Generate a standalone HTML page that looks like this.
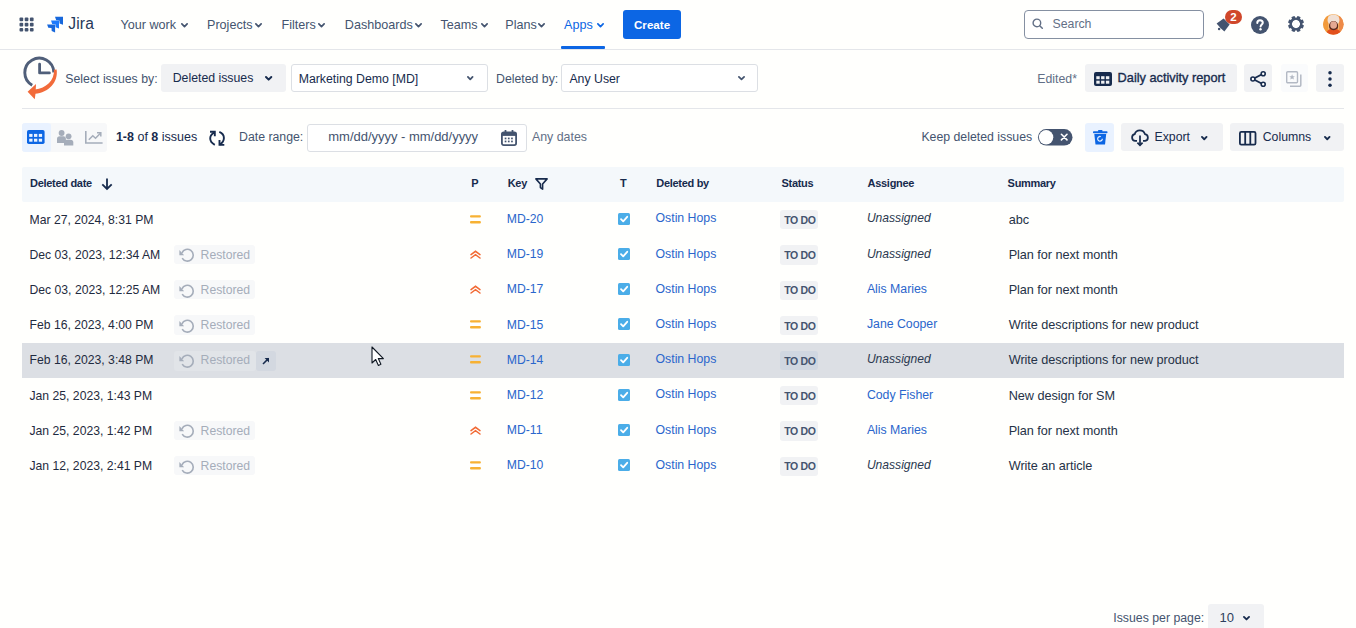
<!DOCTYPE html>
<html><head><meta charset="utf-8">
<style>
*{margin:0;padding:0;box-sizing:border-box}
html,body{width:1356px;height:628px;overflow:hidden;background:#fffffd;font-family:"Liberation Sans",sans-serif;color:#172B4D}
.a{position:absolute}
.t{position:absolute;white-space:nowrap;height:20px;line-height:20px;font-size:12.3px}
svg{position:absolute;overflow:visible}
.box{position:absolute;border-radius:3px}
</style></head><body>

<div class="box" style="left:0px;top:49px;width:1356px;height:1px;background:#E4E6EA;border-radius:0px;"></div>
<svg style="left:19px;top:17px" width="15" height="15" viewBox="0 0 15 15"><g fill="#44546F"><rect x="0.5" y="0.5" width="3.7" height="3.7" rx="1"/><rect x="0.5" y="5.7" width="3.7" height="3.7" rx="1"/><rect x="0.5" y="10.9" width="3.7" height="3.7" rx="1"/><rect x="5.7" y="0.5" width="3.7" height="3.7" rx="1"/><rect x="5.7" y="5.7" width="3.7" height="3.7" rx="1"/><rect x="5.7" y="10.9" width="3.7" height="3.7" rx="1"/><rect x="10.9" y="0.5" width="3.7" height="3.7" rx="1"/><rect x="10.9" y="5.7" width="3.7" height="3.7" rx="1"/><rect x="10.9" y="10.9" width="3.7" height="3.7" rx="1"/></g></svg>
<svg style="left:0;top:0" width="70" height="40" viewBox="0 0 70 40"><path d="M55.0 16.8 L63.0 16.8 L63.0 24.8 L59.6 23.4 L59.4 20.400000000000002 L56.2 20.2 Z" fill="#1868DB"/><path d="M51.0 20.6 L59.0 20.6 L59.0 28.6 L55.6 27.200000000000003 L55.4 24.200000000000003 L52.2 24.0 Z" fill="#1D7AFC"/><path d="M47.1 24.4 L55.1 24.4 L55.1 32.4 L51.7 31.0 L51.5 28.0 L48.300000000000004 27.799999999999997 Z" fill="#1868DB"/></svg>
<div class="t" style="left:68.2px;top:14.30px;font-size:15.6px;color:#253858;letter-spacing:0.2px">Jira</div>
<div class="t" style="left:120.5px;top:14.50px;font-size:12.6px;color:#44546F;">Your work</div>
<svg style="left:181px;top:22.7px" width="7" height="4.4" viewBox="0 0 7 4.4"><path d="M0.85 0.85 L3.50 3.55 L6.15 0.85" fill="none" stroke="#44546F" stroke-width="1.7" stroke-linecap="round" stroke-linejoin="round"/></svg>
<div class="t" style="left:207px;top:14.50px;font-size:12.6px;color:#44546F;">Projects</div>
<svg style="left:255.3px;top:22.7px" width="7" height="4.4" viewBox="0 0 7 4.4"><path d="M0.85 0.85 L3.50 3.55 L6.15 0.85" fill="none" stroke="#44546F" stroke-width="1.7" stroke-linecap="round" stroke-linejoin="round"/></svg>
<div class="t" style="left:281.5px;top:14.50px;font-size:12.6px;color:#44546F;">Filters</div>
<svg style="left:318.2px;top:22.7px" width="7" height="4.4" viewBox="0 0 7 4.4"><path d="M0.85 0.85 L3.50 3.55 L6.15 0.85" fill="none" stroke="#44546F" stroke-width="1.7" stroke-linecap="round" stroke-linejoin="round"/></svg>
<div class="t" style="left:344.8px;top:14.50px;font-size:12.6px;color:#44546F;">Dashboards</div>
<svg style="left:415.2px;top:22.7px" width="7" height="4.4" viewBox="0 0 7 4.4"><path d="M0.85 0.85 L3.50 3.55 L6.15 0.85" fill="none" stroke="#44546F" stroke-width="1.7" stroke-linecap="round" stroke-linejoin="round"/></svg>
<div class="t" style="left:440.5px;top:14.50px;font-size:12.6px;color:#44546F;">Teams</div>
<svg style="left:480.5px;top:22.7px" width="7" height="4.4" viewBox="0 0 7 4.4"><path d="M0.85 0.85 L3.50 3.55 L6.15 0.85" fill="none" stroke="#44546F" stroke-width="1.7" stroke-linecap="round" stroke-linejoin="round"/></svg>
<div class="t" style="left:505.3px;top:14.50px;font-size:12.6px;color:#44546F;">Plans</div>
<svg style="left:538.2px;top:22.7px" width="7" height="4.4" viewBox="0 0 7 4.4"><path d="M0.85 0.85 L3.50 3.55 L6.15 0.85" fill="none" stroke="#44546F" stroke-width="1.7" stroke-linecap="round" stroke-linejoin="round"/></svg>
<div class="t" style="left:564px;top:14.50px;font-size:12.6px;color:#0C66E4;">Apps</div>
<svg style="left:596.5px;top:22.7px" width="7" height="4.4" viewBox="0 0 7 4.4"><path d="M0.85 0.85 L3.50 3.55 L6.15 0.85" fill="none" stroke="#0C66E4" stroke-width="1.7" stroke-linecap="round" stroke-linejoin="round"/></svg>
<div class="box" style="left:561px;top:46px;width:44px;height:3px;background:#0C66E4;border-radius:1px;"></div>
<div class="box" style="left:623px;top:10px;width:58px;height:29px;background:#0C66E4;border-radius:3px;"></div>
<div class="t" style="left:634px;top:14.50px;font-size:11.6px;color:#fff;font-weight:bold;">Create</div>
<div class="box" style="left:1024px;top:10px;width:180px;height:29px;border:1px solid #8590A2;border-radius:4px;background:#fff"></div>
<svg style="left:1032px;top:17.5px" width="12" height="12" viewBox="0 0 12 12"><circle cx="4.9" cy="4.9" r="3.8" fill="none" stroke="#626F86" stroke-width="1.4"/><path d="M7.7 7.7 L10.3 10.3" stroke="#626F86" stroke-width="1.5" stroke-linecap="round"/></svg>
<div class="t" style="left:1052.5px;top:13.80px;font-size:12.3px;color:#626F86;">Search</div>
<svg style="left:1212px;top:8px" width="22" height="26" viewBox="0 0 22 26"><path d="M4.6 15.5 L11.6 10.4 L17.6 16.4 L12.4 23.6 Q8.2 20.2 4.6 15.5 Z" fill="#44546F"/><circle cx="7.1" cy="21.1" r="1.25" fill="#44546F"/></svg>
<div class="box" style="left:1225.4px;top:10px;width:16.4px;height:13.8px;border-radius:7px;background:#D0472A"></div>
<div class="t" style="left:1230.3px;top:6.9px;font-size:11.5px;color:#fff;font-weight:bold">2</div>
<svg style="left:1251px;top:15.5px" width="18" height="18" viewBox="0 0 18 18"><circle cx="9" cy="9" r="9" fill="#44546F"/><path d="M6.3 7 C6.3 5.3 7.5 4.3 9 4.3 C10.6 4.3 11.8 5.3 11.8 6.8 C11.8 8.4 9.6 8.8 9.6 10.6" fill="none" stroke="#fff" stroke-width="2" stroke-linecap="round"/><circle cx="9.5" cy="13.3" r="1.2" fill="#fff"/></svg>
<svg style="left:1287.5px;top:16.3px" width="16" height="16" viewBox="0 0 16 16"><g fill="#44546F"><rect x="6.3" y="0" width="3.4" height="4" rx="0.4" transform="rotate(22.5 8 8)"/><rect x="6.3" y="0" width="3.4" height="4" rx="0.4" transform="rotate(67.5 8 8)"/><rect x="6.3" y="0" width="3.4" height="4" rx="0.4" transform="rotate(112.5 8 8)"/><rect x="6.3" y="0" width="3.4" height="4" rx="0.4" transform="rotate(157.5 8 8)"/><rect x="6.3" y="0" width="3.4" height="4" rx="0.4" transform="rotate(202.5 8 8)"/><rect x="6.3" y="0" width="3.4" height="4" rx="0.4" transform="rotate(247.5 8 8)"/><rect x="6.3" y="0" width="3.4" height="4" rx="0.4" transform="rotate(292.5 8 8)"/><rect x="6.3" y="0" width="3.4" height="4" rx="0.4" transform="rotate(337.5 8 8)"/></g><circle cx="8" cy="8" r="5.4" fill="none" stroke="#44546F" stroke-width="2.3"/></svg>
<svg style="left:1323.2px;top:14px" width="21" height="21" viewBox="0 0 21 21"><defs><clipPath id="avc"><circle cx="10.35" cy="10.35" r="10.3"/></clipPath></defs><g clip-path="url(#avc)"><rect x="0" y="0" width="21" height="21" fill="#F4B46A"/><rect x="0" y="0" width="5" height="21" fill="#F29A3A"/><rect x="16" y="0" width="5" height="21" fill="#EE8A48"/><ellipse cx="10.5" cy="6" rx="6" ry="5.5" fill="#F1E0D4"/><ellipse cx="10.6" cy="12" rx="4.6" ry="5" fill="#5B2B1E"/><ellipse cx="10.6" cy="11" rx="3.4" ry="3.8" fill="#E4A892"/><path d="M3 21 Q4 15.5 7.5 15 Q10.5 17.5 13.5 15 Q17 15.5 18 21 Z" fill="#E2501C"/></g></svg>
<svg style="left:0;top:0" width="70" height="110" viewBox="0 0 70 110"><path d="M32.2 85.3 A14.5 14.5 0 1 1 53.8 72.4" fill="none" stroke="#505F79" stroke-width="2.9"/><path d="M39.6 64.2 V72.9 H49.4" fill="none" stroke="#505F79" stroke-width="2.8" stroke-linecap="round" stroke-linejoin="round"/><path d="M56.6 69.4 C58.6 82 48.5 92.6 35 93.8 L35 89.6 C46 88.4 54.6 80.5 54 69.8 Z" fill="#F26B3A"/><path d="M36 84 L27.6 91.8 L34.8 99.3 L35.6 93 Z" fill="#F26B3A"/></svg>
<div class="t" style="left:65.3px;top:68.70px;font-size:12.3px;color:#44546F;">Select issues by:</div>
<div class="box" style="left:161px;top:64px;width:124.5px;height:28.3px;background:#F1F2F4;border-radius:3px;"></div>
<div class="t" style="left:172.7px;top:68.10px;font-size:12.3px;color:#172B4D;">Deleted issues</div>
<svg style="left:265px;top:76px" width="7.3" height="4.6" viewBox="0 0 7.3 4.6"><path d="M1.00 1.00 L3.65 3.60 L6.30 1.00" fill="none" stroke="#172B4D" stroke-width="2" stroke-linecap="round" stroke-linejoin="round"/></svg>
<div class="box" style="left:290.5px;top:64.3px;width:197.2px;height:28.2px;border:1px solid #DCDFE4;border-radius:3px;background:#fff"></div>
<div class="t" style="left:298.7px;top:68.60px;font-size:12.3px;color:#172B4D;">Marketing Demo [MD]</div>
<svg style="left:467.4px;top:76px" width="6.5" height="4.2" viewBox="0 0 6.5 4.2"><path d="M0.90 0.90 L3.25 3.30 L5.60 0.90" fill="none" stroke="#44546F" stroke-width="1.8" stroke-linecap="round" stroke-linejoin="round"/></svg>
<div class="t" style="left:496px;top:68.60px;font-size:12.3px;color:#44546F;">Deleted by:</div>
<div class="box" style="left:561.3px;top:64.3px;width:197.2px;height:28.2px;border:1px solid #DCDFE4;border-radius:3px;background:#fff"></div>
<div class="t" style="left:569.4px;top:68.60px;font-size:12.3px;color:#172B4D;">Any User</div>
<svg style="left:737.8px;top:76px" width="7" height="4.2" viewBox="0 0 7 4.2"><path d="M0.90 0.90 L3.50 3.30 L6.10 0.90" fill="none" stroke="#44546F" stroke-width="1.8" stroke-linecap="round" stroke-linejoin="round"/></svg>
<div class="t" style="left:1037.3px;top:68.60px;font-size:12.3px;color:#626F86;">Edited*</div>
<div class="box" style="left:1085.2px;top:64.2px;width:151.6px;height:28.2px;background:#F1F2F4;border-radius:3px;"></div>
<svg style="left:1094px;top:71.8px" width="18" height="14" viewBox="0 0 18 14"><rect x="0" y="0" width="18" height="14" rx="2" fill="#172B4D"/><rect x="2.3" y="4.2" width="3.4" height="3" fill="#F1F2F4"/><rect x="2.3" y="8.7" width="3.4" height="3" fill="#F1F2F4"/><rect x="7.1" y="4.2" width="3.4" height="3" fill="#F1F2F4"/><rect x="7.1" y="8.7" width="3.4" height="3" fill="#F1F2F4"/><rect x="11.9" y="4.2" width="3.4" height="3" fill="#F1F2F4"/><rect x="11.9" y="8.7" width="3.4" height="3" fill="#F1F2F4"/></svg>
<div class="t" style="left:1117.6px;top:67.50px;font-size:12.75px;color:#172B4D;-webkit-text-stroke:0.35px #172B4D">Daily activity report</div>
<div class="box" style="left:1244.1px;top:64.2px;width:27.7px;height:28.2px;background:#F1F2F4;border-radius:3px;"></div>
<svg style="left:1249.8px;top:70.9px" width="16" height="16" viewBox="0 0 16 16"><path d="M13 2.8 L3 8 L13 13.2" fill="none" stroke="#172B4D" stroke-width="1.8"/><circle cx="13.2" cy="2.7" r="2" fill="#fff" stroke="#172B4D" stroke-width="1.6"/><circle cx="13.2" cy="13.3" r="2" fill="#fff" stroke="#172B4D" stroke-width="1.6"/><circle cx="2.9" cy="8" r="2" fill="#fff" stroke="#172B4D" stroke-width="1.6"/></svg>
<div class="box" style="left:1280.9px;top:64.2px;width:26.7px;height:28.2px;background:#FAFBFC;border-radius:3px;"></div>
<svg style="left:1285.7px;top:70.9px" width="16" height="16" viewBox="0 0 16 16"><rect x="0.7" y="0.7" width="10.8" height="11" rx="1" fill="none" stroke="#B3B9C4" stroke-width="1.4"/><path d="M14.8 3.5 V14.2 Q14.8 15.2 13.8 15.2 H4" fill="none" stroke="#B3B9C4" stroke-width="1.5"/><path d="M6.1 3.3 L6.9 5.2 L8.9 5.3 L7.4 6.6 L7.9 8.6 L6.1 7.5 L4.3 8.6 L4.8 6.6 L3.3 5.3 L5.3 5.2 Z" fill="#B3B9C4"/></svg>
<div class="box" style="left:1316.2px;top:64.2px;width:27.7px;height:28.2px;background:#F1F2F4;border-radius:3px;"></div>
<svg style="left:1328px;top:70.8px" width="4" height="16" viewBox="0 0 4 16"><circle cx="2" cy="1.8" r="1.75" fill="#172B4D"/><circle cx="2" cy="8" r="1.75" fill="#172B4D"/><circle cx="2" cy="14.3" r="1.75" fill="#172B4D"/></svg>
<div class="box" style="left:22px;top:108px;width:1322px;height:1px;background:#E4E6EA;border-radius:0px;"></div>
<div class="box" style="left:22.1px;top:123.3px;width:85px;height:28.3px;background:#F7F8F9;border-radius:3px;"></div>
<div class="box" style="left:22.1px;top:123.3px;width:29.2px;height:28.3px;background:#E9F2FF;border-radius:3px;"></div>
<svg style="left:27px;top:130.4px" width="18" height="14" viewBox="0 0 18 14"><rect x="0" y="0" width="17.6" height="14.1" rx="1.8" fill="#0C66E4"/><rect x="2.2" y="3.9" width="3.3" height="3" fill="#E9F2FF"/><rect x="2.2" y="8.7" width="3.3" height="3" fill="#E9F2FF"/><rect x="7.0" y="3.9" width="3.3" height="3" fill="#E9F2FF"/><rect x="7.0" y="8.7" width="3.3" height="3" fill="#E9F2FF"/><rect x="11.8" y="3.9" width="3.3" height="3" fill="#E9F2FF"/><rect x="11.8" y="8.7" width="3.3" height="3" fill="#E9F2FF"/></svg>
<svg style="left:56.6px;top:130px" width="17" height="16" viewBox="0 0 17 16"><g fill="#A5ADBA"><circle cx="4.6" cy="3" r="2.9"/><path d="M0 13 V9 Q0 6.3 2.8 6.3 H6.5 Q8.5 6.3 8.9 8 V13 Z"/><circle cx="11.6" cy="6.3" r="2.9"/><path d="M7 15.4 V12.5 Q7 9.8 9.8 9.8 H13.5 Q16.3 9.8 16.3 12.5 V15.4 Z"/></g></svg>
<svg style="left:85px;top:131.3px" width="18" height="13" viewBox="0 0 18 13"><path d="M0.8 0 V12 H17.6" fill="none" stroke="#A5ADBA" stroke-width="1.6"/><path d="M3.8 8.8 L7.8 4.8 L10.5 7.2 L15.4 2.2" fill="none" stroke="#A5ADBA" stroke-width="1.5"/><path d="M12 1.8 H15.8 V5.6" fill="none" stroke="#A5ADBA" stroke-width="1.5"/></svg>
<div class="t" style="left:115.9px;top:126.8px;font-size:12.5px;color:#172B4D"><b>1-8</b> of <b>8</b> issues</div>
<svg style="left:208.8px;top:130.5px" width="16" height="15" viewBox="0 0 16 15"><g fill="none" stroke="#172B4D" stroke-width="1.9"><path d="M5.6 1.3 C0 4 -0.6 10.5 5.8 13.8"/><path d="M1 0.7 H5.8 V5.2"/><path d="M10.3 0.9 C16.6 3.5 16.2 10.5 10.6 13.6"/><path d="M10.5 9.1 V13.9 H15.3"/></g></svg>
<div class="t" style="left:239px;top:126.80px;font-size:12.3px;color:#44546F;">Date range:</div>
<div class="box" style="left:306.6px;top:123.5px;width:220.8px;height:28.1px;border:1px solid #DCDFE4;border-radius:3px;background:#fff"></div>
<div class="t" style="left:328.3px;top:126.80px;font-size:13px;color:#44546F;letter-spacing:-0.02px">mm/dd/yyyy - mm/dd/yyyy</div>
<svg style="left:500.9px;top:130.2px" width="16" height="16" viewBox="0 0 16 16"><rect x="0.9" y="2.3" width="14.2" height="12.8" rx="1.8" fill="none" stroke="#44546F" stroke-width="1.8"/><rect x="0.9" y="2.3" width="14.2" height="3.6" fill="#44546F"/><rect x="3.6" y="0" width="1.8" height="3.5" rx="0.6" fill="#44546F"/><rect x="10.6" y="0" width="1.8" height="3.5" rx="0.6" fill="#44546F"/><rect x="3.7" y="7.6" width="1.7" height="1.7" fill="#44546F"/><rect x="3.7" y="10.6" width="1.7" height="1.7" fill="#44546F"/><rect x="6.9" y="7.6" width="1.7" height="1.7" fill="#44546F"/><rect x="6.9" y="10.6" width="1.7" height="1.7" fill="#44546F"/><rect x="10.1" y="7.6" width="1.7" height="1.7" fill="#44546F"/><rect x="10.1" y="10.6" width="1.7" height="1.7" fill="#44546F"/></svg>
<div class="t" style="left:531.9px;top:126.80px;font-size:12.4px;color:#626F86;">Any dates</div>
<div class="t" style="left:921.4px;top:126.80px;font-size:12.3px;color:#44546F;">Keep deleted issues</div>
<svg style="left:1038.2px;top:129px" width="35" height="17" viewBox="0 0 35 17"><rect x="0" y="0" width="34.5" height="16.6" rx="8.3" fill="#44546F"/><circle cx="8.1" cy="8.3" r="7.2" fill="#fff"/><path d="M23.4 5.3 L29 10.9 M29 5.3 L23.4 10.9" stroke="#fff" stroke-width="1.6" stroke-linecap="round"/></svg>
<div class="box" style="left:1085.2px;top:122.9px;width:28.4px;height:28.8px;background:#E9F2FF;border-radius:3px;"></div>
<svg style="left:1092.5px;top:130.2px" width="15" height="15" viewBox="0 0 15 15"><rect x="0" y="1.3" width="14.5" height="2" rx="0.8" fill="#0C66E4"/><rect x="5" y="0" width="4.5" height="2" rx="0.8" fill="#0C66E4"/><path d="M1.3 4 H13.2 L12 14.6 H2.5 Z" fill="#0C66E4"/><path d="M9.3 8.8 A2.3 2.3 0 1 1 7.2 6.5" fill="none" stroke="#E9F2FF" stroke-width="1.2"/><path d="M6.6 5.4 L8.2 6.5 L6.6 7.6 Z" fill="#E9F2FF"/></svg>
<div class="box" style="left:1121.4px;top:123.2px;width:101.3px;height:28.2px;background:#F1F2F4;border-radius:3px;"></div>
<svg style="left:1130.8px;top:129.8px" width="18" height="16" viewBox="0 0 18 16"><path d="M6 10.9 H4.3 A3.4 3.4 0 0 1 3.7 4.2 A5.3 5.3 0 0 1 13.9 4.1 A3.45 3.45 0 0 1 14.1 10.9 H12" fill="none" stroke="#172B4D" stroke-width="1.75" stroke-linejoin="round"/><path d="M9 5.6 V15.2" stroke="#172B4D" stroke-width="1.75"/><path d="M6.4 12.6 L9 15.3 L11.6 12.6" fill="none" stroke="#172B4D" stroke-width="1.75"/></svg>
<div class="t" style="left:1154.5px;top:126.80px;font-size:12.3px;color:#172B4D;">Export</div>
<svg style="left:1201.4px;top:136px" width="6.5" height="4.2" viewBox="0 0 6.5 4.2"><path d="M0.95 0.95 L3.25 3.25 L5.55 0.95" fill="none" stroke="#172B4D" stroke-width="1.9" stroke-linecap="round" stroke-linejoin="round"/></svg>
<div class="box" style="left:1230px;top:123.2px;width:113.6px;height:28.2px;background:#F1F2F4;border-radius:3px;"></div>
<svg style="left:1239.2px;top:130.5px" width="18" height="15" viewBox="0 0 18 15"><rect x="0.9" y="0.9" width="15.6" height="12.8" rx="1.4" fill="none" stroke="#172B4D" stroke-width="1.8"/><path d="M6.2 1 V13.6 M11.3 1 V13.6" stroke="#172B4D" stroke-width="1.8"/></svg>
<div class="t" style="left:1262.7px;top:126.80px;font-size:12.3px;color:#172B4D;">Columns</div>
<svg style="left:1323.6px;top:136px" width="6.5" height="4.2" viewBox="0 0 6.5 4.2"><path d="M0.95 0.95 L3.25 3.25 L5.55 0.95" fill="none" stroke="#172B4D" stroke-width="1.9" stroke-linecap="round" stroke-linejoin="round"/></svg>
<div class="box" style="left:22px;top:166.7px;width:1321.5px;height:35px;background:#F4F8FB;border-radius:2px;"></div>
<div class="t" style="left:30px;top:173.2px;font-size:11px;font-weight:bold;color:#172B4D;letter-spacing:-0.3px">Deleted date</div>
<svg style="left:100.8px;top:177.7px" width="12" height="12" viewBox="0 0 12 12"><path d="M6 0.5 V11" stroke="#172B4D" stroke-width="1.8"/><path d="M1.3 6.3 L6 11 L10.7 6.3" fill="none" stroke="#172B4D" stroke-width="1.8"/></svg>
<div class="t" style="left:471.3px;top:173.2px;font-size:11px;font-weight:bold;color:#172B4D;letter-spacing:-0.3px">P</div>
<div class="t" style="left:507.7px;top:173.2px;font-size:11px;font-weight:bold;color:#172B4D;letter-spacing:-0.3px">Key</div>
<svg style="left:534.6px;top:177.6px" width="13" height="12" viewBox="0 0 13 12"><path d="M0.9 0.9 H12.1 L7.6 6 V11.2 L5.4 9.6 V6 Z" fill="none" stroke="#172B4D" stroke-width="1.6" stroke-linejoin="round"/></svg>
<div class="t" style="left:620px;top:173.2px;font-size:11px;font-weight:bold;color:#172B4D;letter-spacing:-0.3px">T</div>
<div class="t" style="left:656.3px;top:173.2px;font-size:11px;font-weight:bold;color:#172B4D;letter-spacing:-0.3px">Deleted by</div>
<div class="t" style="left:781.5px;top:173.2px;font-size:11px;font-weight:bold;color:#172B4D;letter-spacing:-0.3px">Status</div>
<div class="t" style="left:867.6px;top:173.2px;font-size:11px;font-weight:bold;color:#172B4D;letter-spacing:-0.3px">Assignee</div>
<div class="t" style="left:1007.6px;top:173.2px;font-size:11px;font-weight:bold;color:#172B4D;letter-spacing:-0.3px">Summary</div>
<div class="t" style="left:29.5px;top:209.60px;font-size:12.2px;color:#1F2B40;">Mar 27, 2024, 8:31 PM</div>
<svg style="left:470px;top:214.60px" width="11" height="9" viewBox="0 0 11 9"><rect x="0" y="0.2" width="10.9" height="2.4" rx="1" fill="#F7B133"/><rect x="0" y="6" width="10.9" height="2.4" rx="1" fill="#F7B133"/></svg>
<div class="t" style="left:506.8px;top:208.90px;font-size:12.2px;color:#2A66CC;">MD-20</div>
<svg style="left:618px;top:212.70px" width="12" height="12" viewBox="0 0 12 12"><rect x="0" y="0" width="12" height="12" rx="1.5" fill="#4BADE8"/><path d="M3 6.2 L5.2 8.4 L9.2 3.8" fill="none" stroke="#fff" stroke-width="1.8" stroke-linecap="round" stroke-linejoin="round"/></svg>
<div class="t" style="left:655.5px;top:208.40px;font-size:12.3px;color:#2A66CC;">Ostin Hops</div>
<div class="box" style="left:780px;top:210.2px;width:38px;height:19.2px;background:#F1F2F4;border-radius:3px;"></div>
<div class="t" style="left:784.2px;top:210.00px;font-size:10.5px;font-weight:bold;color:#44546F;letter-spacing:-0.35px">TO DO</div>
<div class="t" style="left:866.9px;top:208.40px;font-size:12.1px;color:#2C3A50;font-style:italic">Unassigned</div>
<div class="t" style="left:1008.7px;top:209.60px;font-size:12.7px;color:#253247;letter-spacing:-0.05px">abc</div>
<div class="t" style="left:29.5px;top:244.80px;font-size:12.2px;color:#1F2B40;">Dec 03, 2023, 12:34 AM</div>
<div class="box" style="left:173.8px;top:244.60000000000002px;width:81.2px;height:19.6px;background:#F7F8F9;border-radius:3px;"></div>
<svg style="left:178.5px;top:248.40px" width="15" height="15" viewBox="0 0 15 15"><path d="M2.95 4.8 A5.9 5.9 0 1 1 3.2 10.15" fill="none" stroke="#A5ADBA" stroke-width="1.6"/><path d="M0.4 2.1 V7.2 H5.1 Z" fill="#A5ADBA"/></svg>
<div class="t" style="left:200.6px;top:244.80px;font-size:12.2px;color:#A5ADBA;">Restored</div>
<svg style="left:470px;top:249.90px" width="11" height="9" viewBox="0 0 11 9"><path d="M1 4.6 L5.5 1.3 L10 4.6" fill="none" stroke="#F26A35" stroke-width="1.5" stroke-linecap="round"/><path d="M1 8 L5.5 4.7 L10 8" fill="none" stroke="#F26A35" stroke-width="1.5" stroke-linecap="round"/></svg>
<div class="t" style="left:506.8px;top:244.10px;font-size:12.2px;color:#2A66CC;">MD-19</div>
<svg style="left:618px;top:247.90px" width="12" height="12" viewBox="0 0 12 12"><rect x="0" y="0" width="12" height="12" rx="1.5" fill="#4BADE8"/><path d="M3 6.2 L5.2 8.4 L9.2 3.8" fill="none" stroke="#fff" stroke-width="1.8" stroke-linecap="round" stroke-linejoin="round"/></svg>
<div class="t" style="left:655.5px;top:243.60px;font-size:12.3px;color:#2A66CC;">Ostin Hops</div>
<div class="box" style="left:780px;top:245.4px;width:38px;height:19.2px;background:#F1F2F4;border-radius:3px;"></div>
<div class="t" style="left:784.2px;top:245.20px;font-size:10.5px;font-weight:bold;color:#44546F;letter-spacing:-0.35px">TO DO</div>
<div class="t" style="left:866.9px;top:243.60px;font-size:12.1px;color:#2C3A50;font-style:italic">Unassigned</div>
<div class="t" style="left:1008.7px;top:244.80px;font-size:12.7px;color:#253247;letter-spacing:-0.05px">Plan for next month</div>
<div class="t" style="left:29.5px;top:280.00px;font-size:12.2px;color:#1F2B40;">Dec 03, 2023, 12:25 AM</div>
<div class="box" style="left:173.8px;top:279.8px;width:81.2px;height:19.6px;background:#F7F8F9;border-radius:3px;"></div>
<svg style="left:178.5px;top:283.60px" width="15" height="15" viewBox="0 0 15 15"><path d="M2.95 4.8 A5.9 5.9 0 1 1 3.2 10.15" fill="none" stroke="#A5ADBA" stroke-width="1.6"/><path d="M0.4 2.1 V7.2 H5.1 Z" fill="#A5ADBA"/></svg>
<div class="t" style="left:200.6px;top:280.00px;font-size:12.2px;color:#A5ADBA;">Restored</div>
<svg style="left:470px;top:285.10px" width="11" height="9" viewBox="0 0 11 9"><path d="M1 4.6 L5.5 1.3 L10 4.6" fill="none" stroke="#F26A35" stroke-width="1.5" stroke-linecap="round"/><path d="M1 8 L5.5 4.7 L10 8" fill="none" stroke="#F26A35" stroke-width="1.5" stroke-linecap="round"/></svg>
<div class="t" style="left:506.8px;top:279.30px;font-size:12.2px;color:#2A66CC;">MD-17</div>
<svg style="left:618px;top:283.10px" width="12" height="12" viewBox="0 0 12 12"><rect x="0" y="0" width="12" height="12" rx="1.5" fill="#4BADE8"/><path d="M3 6.2 L5.2 8.4 L9.2 3.8" fill="none" stroke="#fff" stroke-width="1.8" stroke-linecap="round" stroke-linejoin="round"/></svg>
<div class="t" style="left:655.5px;top:278.80px;font-size:12.3px;color:#2A66CC;">Ostin Hops</div>
<div class="box" style="left:780px;top:280.6px;width:38px;height:19.2px;background:#F1F2F4;border-radius:3px;"></div>
<div class="t" style="left:784.2px;top:280.40px;font-size:10.5px;font-weight:bold;color:#44546F;letter-spacing:-0.35px">TO DO</div>
<div class="t" style="left:866.9px;top:279.00px;font-size:12.3px;color:#2A66CC;">Alis Maries</div>
<div class="t" style="left:1008.7px;top:280.00px;font-size:12.7px;color:#253247;letter-spacing:-0.05px">Plan for next month</div>
<div class="t" style="left:29.5px;top:315.20px;font-size:12.2px;color:#1F2B40;">Feb 16, 2023, 4:00 PM</div>
<div class="box" style="left:173.8px;top:315.0px;width:81.2px;height:19.6px;background:#F7F8F9;border-radius:3px;"></div>
<svg style="left:178.5px;top:318.80px" width="15" height="15" viewBox="0 0 15 15"><path d="M2.95 4.8 A5.9 5.9 0 1 1 3.2 10.15" fill="none" stroke="#A5ADBA" stroke-width="1.6"/><path d="M0.4 2.1 V7.2 H5.1 Z" fill="#A5ADBA"/></svg>
<div class="t" style="left:200.6px;top:315.20px;font-size:12.2px;color:#A5ADBA;">Restored</div>
<svg style="left:470px;top:320.20px" width="11" height="9" viewBox="0 0 11 9"><rect x="0" y="0.2" width="10.9" height="2.4" rx="1" fill="#F7B133"/><rect x="0" y="6" width="10.9" height="2.4" rx="1" fill="#F7B133"/></svg>
<div class="t" style="left:506.8px;top:314.50px;font-size:12.2px;color:#2A66CC;">MD-15</div>
<svg style="left:618px;top:318.30px" width="12" height="12" viewBox="0 0 12 12"><rect x="0" y="0" width="12" height="12" rx="1.5" fill="#4BADE8"/><path d="M3 6.2 L5.2 8.4 L9.2 3.8" fill="none" stroke="#fff" stroke-width="1.8" stroke-linecap="round" stroke-linejoin="round"/></svg>
<div class="t" style="left:655.5px;top:314.00px;font-size:12.3px;color:#2A66CC;">Ostin Hops</div>
<div class="box" style="left:780px;top:315.8px;width:38px;height:19.2px;background:#F1F2F4;border-radius:3px;"></div>
<div class="t" style="left:784.2px;top:315.60px;font-size:10.5px;font-weight:bold;color:#44546F;letter-spacing:-0.35px">TO DO</div>
<div class="t" style="left:866.9px;top:314.20px;font-size:12.3px;color:#2A66CC;">Jane Cooper</div>
<div class="t" style="left:1008.7px;top:315.20px;font-size:12.7px;color:#253247;letter-spacing:-0.05px">Write descriptions for new product</div>
<div class="box" style="left:22px;top:343.09999999999997px;width:1322px;height:34.7px;background:#DCDFE4;border-radius:0px;"></div>
<div class="t" style="left:29.5px;top:350.40px;font-size:12.2px;color:#1F2B40;">Feb 16, 2023, 3:48 PM</div>
<div class="box" style="left:173.6px;top:350.59999999999997px;width:82px;height:20.6px;background:#E1E4E8;border-radius:3px;"></div>
<div class="box" style="left:255.6px;top:350.59999999999997px;width:20.6px;height:20.6px;background:#D3D8E0;border-radius:3px;"></div>
<svg style="left:262.2px;top:357.40px" width="8" height="8" viewBox="0 0 8 8"><path d="M1 7 L6.6 1.4" stroke="#172B4D" stroke-width="1.5"/><path d="M2.6 1 H7 V5.4 Z" fill="#172B4D"/></svg>
<svg style="left:178.5px;top:354.00px" width="15" height="15" viewBox="0 0 15 15"><path d="M2.95 4.8 A5.9 5.9 0 1 1 3.2 10.15" fill="none" stroke="#A5ADBA" stroke-width="1.6"/><path d="M0.4 2.1 V7.2 H5.1 Z" fill="#A5ADBA"/></svg>
<div class="t" style="left:200.6px;top:350.40px;font-size:12.2px;color:#A5ADBA;">Restored</div>
<svg style="left:470px;top:355.40px" width="11" height="9" viewBox="0 0 11 9"><rect x="0" y="0.2" width="10.9" height="2.4" rx="1" fill="#F7B133"/><rect x="0" y="6" width="10.9" height="2.4" rx="1" fill="#F7B133"/></svg>
<div class="t" style="left:506.8px;top:349.70px;font-size:12.2px;color:#2A66CC;">MD-14</div>
<svg style="left:618px;top:353.50px" width="12" height="12" viewBox="0 0 12 12"><rect x="0" y="0" width="12" height="12" rx="1.5" fill="#4BADE8"/><path d="M3 6.2 L5.2 8.4 L9.2 3.8" fill="none" stroke="#fff" stroke-width="1.8" stroke-linecap="round" stroke-linejoin="round"/></svg>
<div class="t" style="left:655.5px;top:349.20px;font-size:12.3px;color:#2A66CC;">Ostin Hops</div>
<div class="box" style="left:780px;top:351.0px;width:38px;height:19.2px;background:#D0D7E1;border-radius:3px;"></div>
<div class="t" style="left:784.2px;top:350.80px;font-size:10.5px;font-weight:bold;color:#44546F;letter-spacing:-0.35px">TO DO</div>
<div class="t" style="left:866.9px;top:349.20px;font-size:12.1px;color:#2C3A50;font-style:italic">Unassigned</div>
<div class="t" style="left:1008.7px;top:350.40px;font-size:12.7px;color:#253247;letter-spacing:-0.05px">Write descriptions for new product</div>
<div class="t" style="left:29.5px;top:385.60px;font-size:12.2px;color:#1F2B40;">Jan 25, 2023, 1:43 PM</div>
<svg style="left:470px;top:390.60px" width="11" height="9" viewBox="0 0 11 9"><rect x="0" y="0.2" width="10.9" height="2.4" rx="1" fill="#F7B133"/><rect x="0" y="6" width="10.9" height="2.4" rx="1" fill="#F7B133"/></svg>
<div class="t" style="left:506.8px;top:384.90px;font-size:12.2px;color:#2A66CC;">MD-12</div>
<svg style="left:618px;top:388.70px" width="12" height="12" viewBox="0 0 12 12"><rect x="0" y="0" width="12" height="12" rx="1.5" fill="#4BADE8"/><path d="M3 6.2 L5.2 8.4 L9.2 3.8" fill="none" stroke="#fff" stroke-width="1.8" stroke-linecap="round" stroke-linejoin="round"/></svg>
<div class="t" style="left:655.5px;top:384.40px;font-size:12.3px;color:#2A66CC;">Ostin Hops</div>
<div class="box" style="left:780px;top:386.20000000000005px;width:38px;height:19.2px;background:#F1F2F4;border-radius:3px;"></div>
<div class="t" style="left:784.2px;top:386.00px;font-size:10.5px;font-weight:bold;color:#44546F;letter-spacing:-0.35px">TO DO</div>
<div class="t" style="left:866.9px;top:384.60px;font-size:12.3px;color:#2A66CC;">Cody Fisher</div>
<div class="t" style="left:1008.7px;top:385.60px;font-size:12.7px;color:#253247;letter-spacing:-0.05px">New design for SM</div>
<div class="t" style="left:29.5px;top:420.80px;font-size:12.2px;color:#1F2B40;">Jan 25, 2023, 1:42 PM</div>
<div class="box" style="left:173.8px;top:420.6px;width:81.2px;height:19.6px;background:#F7F8F9;border-radius:3px;"></div>
<svg style="left:178.5px;top:424.40px" width="15" height="15" viewBox="0 0 15 15"><path d="M2.95 4.8 A5.9 5.9 0 1 1 3.2 10.15" fill="none" stroke="#A5ADBA" stroke-width="1.6"/><path d="M0.4 2.1 V7.2 H5.1 Z" fill="#A5ADBA"/></svg>
<div class="t" style="left:200.6px;top:420.80px;font-size:12.2px;color:#A5ADBA;">Restored</div>
<svg style="left:470px;top:425.90px" width="11" height="9" viewBox="0 0 11 9"><path d="M1 4.6 L5.5 1.3 L10 4.6" fill="none" stroke="#F26A35" stroke-width="1.5" stroke-linecap="round"/><path d="M1 8 L5.5 4.7 L10 8" fill="none" stroke="#F26A35" stroke-width="1.5" stroke-linecap="round"/></svg>
<div class="t" style="left:506.8px;top:420.10px;font-size:12.2px;color:#2A66CC;">MD-11</div>
<svg style="left:618px;top:423.90px" width="12" height="12" viewBox="0 0 12 12"><rect x="0" y="0" width="12" height="12" rx="1.5" fill="#4BADE8"/><path d="M3 6.2 L5.2 8.4 L9.2 3.8" fill="none" stroke="#fff" stroke-width="1.8" stroke-linecap="round" stroke-linejoin="round"/></svg>
<div class="t" style="left:655.5px;top:419.60px;font-size:12.3px;color:#2A66CC;">Ostin Hops</div>
<div class="box" style="left:780px;top:421.40000000000003px;width:38px;height:19.2px;background:#F1F2F4;border-radius:3px;"></div>
<div class="t" style="left:784.2px;top:421.20px;font-size:10.5px;font-weight:bold;color:#44546F;letter-spacing:-0.35px">TO DO</div>
<div class="t" style="left:866.9px;top:419.80px;font-size:12.3px;color:#2A66CC;">Alis Maries</div>
<div class="t" style="left:1008.7px;top:420.80px;font-size:12.7px;color:#253247;letter-spacing:-0.05px">Plan for next month</div>
<div class="t" style="left:29.5px;top:456.00px;font-size:12.2px;color:#1F2B40;">Jan 12, 2023, 2:41 PM</div>
<div class="box" style="left:173.8px;top:455.8px;width:81.2px;height:19.6px;background:#F7F8F9;border-radius:3px;"></div>
<svg style="left:178.5px;top:459.60px" width="15" height="15" viewBox="0 0 15 15"><path d="M2.95 4.8 A5.9 5.9 0 1 1 3.2 10.15" fill="none" stroke="#A5ADBA" stroke-width="1.6"/><path d="M0.4 2.1 V7.2 H5.1 Z" fill="#A5ADBA"/></svg>
<div class="t" style="left:200.6px;top:456.00px;font-size:12.2px;color:#A5ADBA;">Restored</div>
<svg style="left:470px;top:461.00px" width="11" height="9" viewBox="0 0 11 9"><rect x="0" y="0.2" width="10.9" height="2.4" rx="1" fill="#F7B133"/><rect x="0" y="6" width="10.9" height="2.4" rx="1" fill="#F7B133"/></svg>
<div class="t" style="left:506.8px;top:455.30px;font-size:12.2px;color:#2A66CC;">MD-10</div>
<svg style="left:618px;top:459.10px" width="12" height="12" viewBox="0 0 12 12"><rect x="0" y="0" width="12" height="12" rx="1.5" fill="#4BADE8"/><path d="M3 6.2 L5.2 8.4 L9.2 3.8" fill="none" stroke="#fff" stroke-width="1.8" stroke-linecap="round" stroke-linejoin="round"/></svg>
<div class="t" style="left:655.5px;top:454.80px;font-size:12.3px;color:#2A66CC;">Ostin Hops</div>
<div class="box" style="left:780px;top:456.6px;width:38px;height:19.2px;background:#F1F2F4;border-radius:3px;"></div>
<div class="t" style="left:784.2px;top:456.40px;font-size:10.5px;font-weight:bold;color:#44546F;letter-spacing:-0.35px">TO DO</div>
<div class="t" style="left:866.9px;top:454.80px;font-size:12.1px;color:#2C3A50;font-style:italic">Unassigned</div>
<div class="t" style="left:1008.7px;top:456.00px;font-size:12.7px;color:#253247;letter-spacing:-0.05px">Write an article</div>
<svg style="left:371px;top:346px" width="14" height="21" viewBox="0 0 14 21"><path d="M1 1 V17 L4.7 13.5 L7.4 19.4 L9.9 18.3 L7.3 12.6 H12.4 Z" fill="#fff" stroke="#0F1722" stroke-width="1.1" stroke-linejoin="round"/></svg>
<div class="t" style="left:1113.3px;top:607.50px;font-size:12.3px;color:#44546F;">Issues per page:</div>
<div class="box" style="left:1208.2px;top:604.3px;width:55.8px;height:30px;background:#F1F2F4;border-radius:3px;"></div>
<div class="t" style="left:1219.5px;top:607.50px;font-size:13px;color:#2C3E5D;">10</div>
<svg style="left:1243.4px;top:615.6px" width="7" height="4.4" viewBox="0 0 7 4.4"><path d="M0.95 0.95 L3.50 3.45 L6.05 0.95" fill="none" stroke="#172B4D" stroke-width="1.9" stroke-linecap="round" stroke-linejoin="round"/></svg>
</body></html>
